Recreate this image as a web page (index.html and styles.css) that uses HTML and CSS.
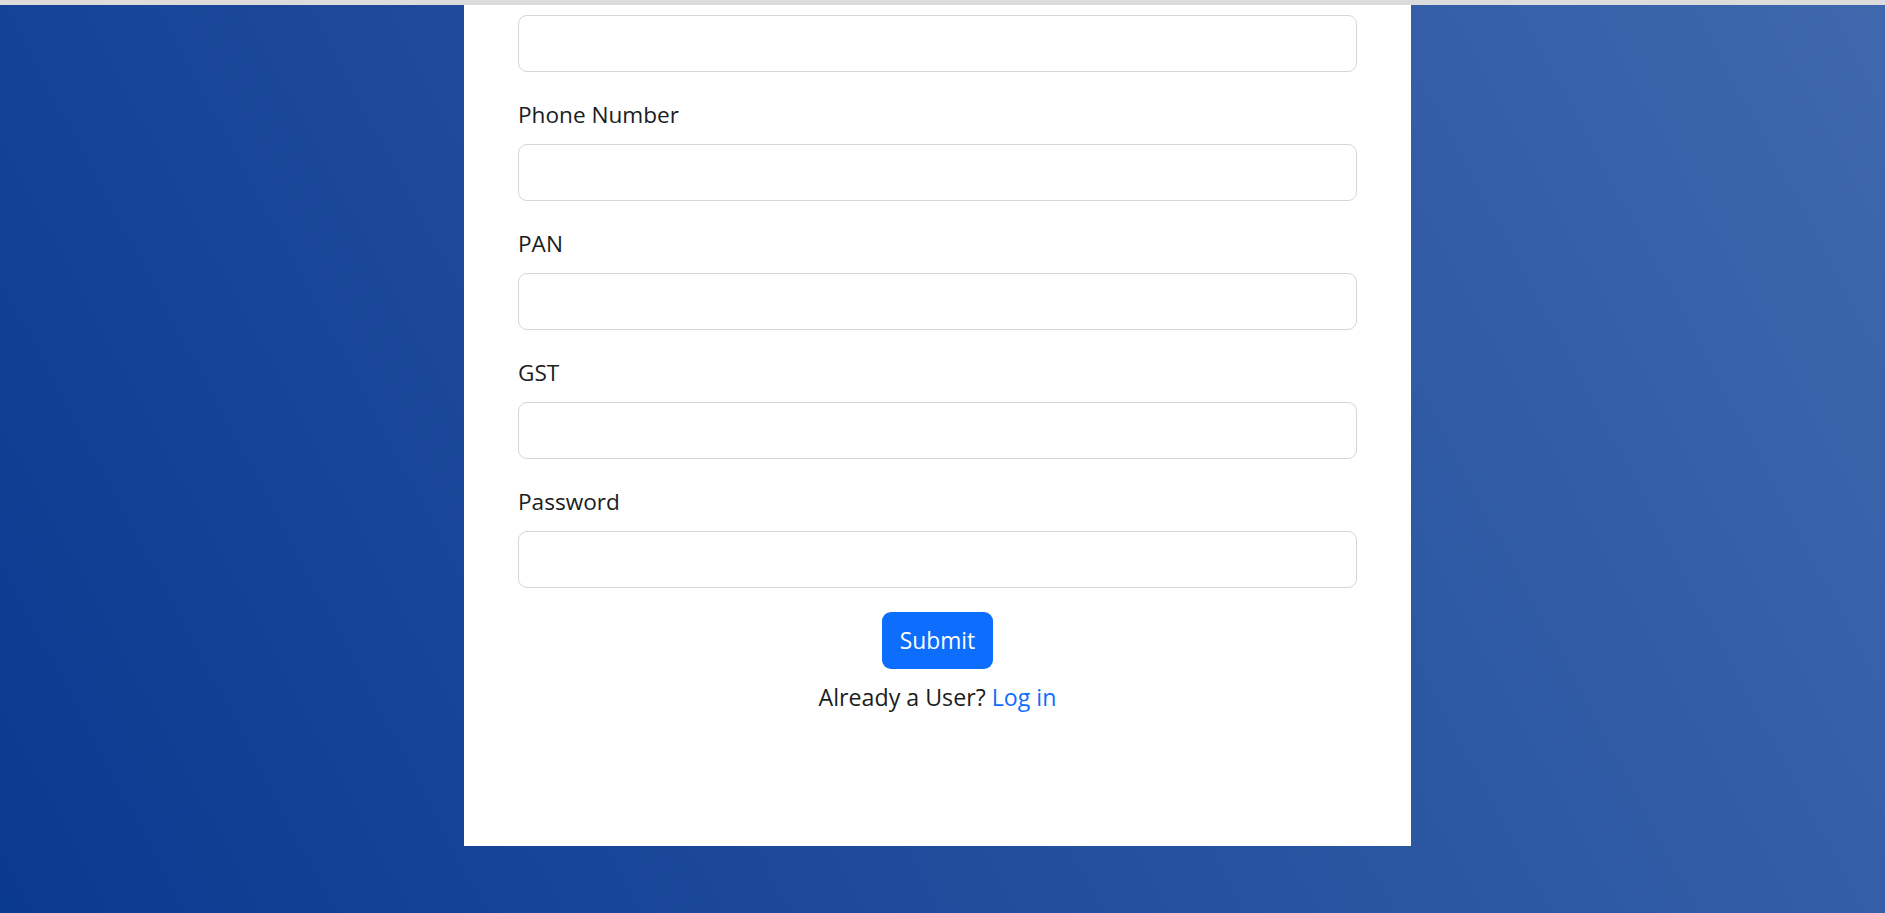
FILE: index.html
```html
<!DOCTYPE html>
<html lang="en">
<head>
<meta charset="utf-8">
<title>Register</title>
<link rel="stylesheet" href="styles.css">
</head>
<body>
<div class="topline"></div>
<main class="page">
  <div class="card">
    <form class="form">
      <div class="group">
        <input class="field" type="email">
      </div>
      <div class="group">
        <label class="label">Phone Number</label>
        <input class="field" type="text">
      </div>
      <div class="group">
        <label class="label">PAN</label>
        <input class="field" type="text">
      </div>
      <div class="group">
        <label class="label">GST</label>
        <input class="field" type="text">
      </div>
      <div class="group">
        <label class="label">Password</label>
        <input class="field" type="password">
      </div>
      <div class="actions">
        <button class="btn" type="button">Submit</button>
      </div>
      <p class="already">Already a User? <a class="link" href="#">Log in</a></p>
    </form>
  </div>
</main>
</body>
</html>
```

FILE: styles.css
```css
* { box-sizing: border-box; }
html, body { margin: 0; padding: 0; }
body {
  font-family: "Open Sans", "Noto Sans", sans-serif;
  font-size: 24px;
  line-height: 1.5;
  color: #1a1d21;
  overflow: hidden;
}
.topline {
  height: 5px;
  background: #dcdcdc;
}
.page {
  height: 908px;
  padding-right: 10px;
  background: linear-gradient(62deg, #0a3990 0%, #3f68ad 100%);
  display: flex;
  justify-content: center;
  align-items: flex-start;
}
.card {
  width: 947px;
  height: 841px;
  background: #ffffff;
  padding: 10px 54px 0;
}
.form { display: flex; flex-direction: column; }
.group {
  display: flex;
  flex-direction: column;
  margin-bottom: 24px;
}
.label {
  display: block;
  margin-bottom: 12px;
  height: 36px;
  padding-top: 2px;
  font-size: 22.6px;
  line-height: 34px;
}
.field {
  display: block;
  width: 100%;
  height: 57px;
  border: 1px solid #d2d6db;
  border-radius: 9px;
  background: #fff;
  font: inherit;
}
.actions {
  display: flex;
  justify-content: center;
}
.btn {
  height: 57px;
  padding: 0 18px;
  border: 0;
  border-radius: 9px;
  background: #0d6efd;
  color: #fff;
  font-family: inherit;
  font-size: 22.8px;
  line-height: 57px;
  cursor: pointer;
}
.already {
  margin: 10px 0 0;
  text-align: center;
  font-size: 23.2px;
  line-height: 36px;
}
.link {
  color: #0d6efd;
  text-decoration: none;
}
```
